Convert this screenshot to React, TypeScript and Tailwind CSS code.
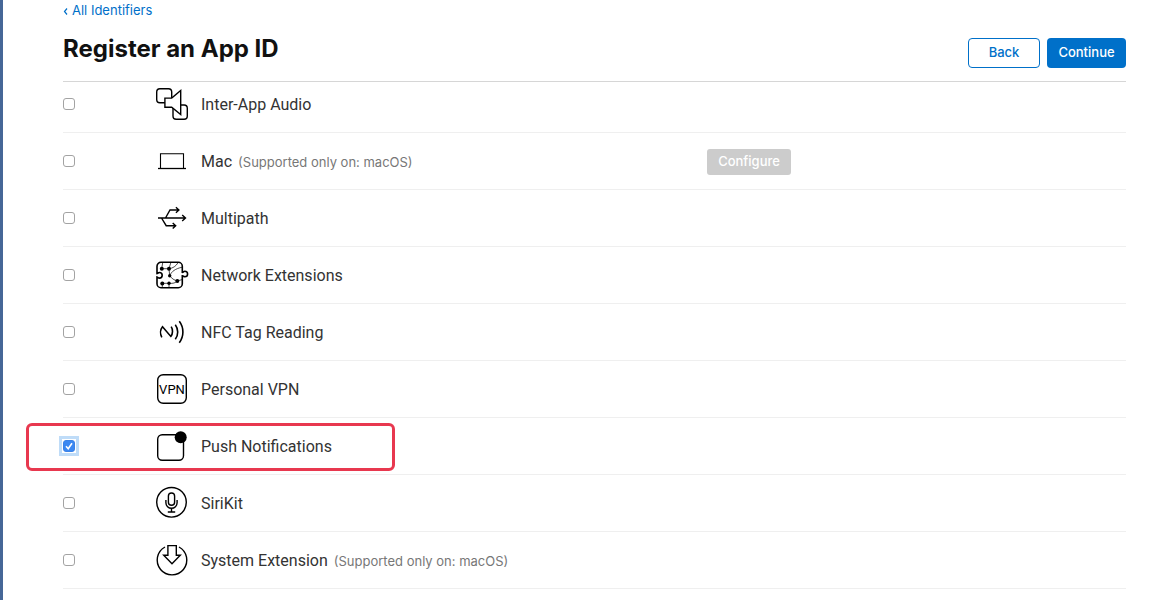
import { useState, type ReactNode } from "react";

function Icon({ children }: { children: ReactNode }) {
  return (
    <svg
      viewBox="0 0 34 34"
      className="size-[34px]"
      fill="none"
      stroke="#000"
      strokeWidth="1.4"
      aria-hidden="true"
    >
      {children}
    </svg>
  );
}

const AudioIcon = (
  <Icon>
    <rect x="1.7" y="1.7" width="15" height="14" rx="3.2" />
    <rect x="18" y="18" width="14.3" height="14.3" rx="3.2" />
    <path d="M9.9 11.1h6.8l9-7.6v24l-9-7.2H9.9z" fill="#fff" />
  </Icon>
);

const MacIcon = (
  <Icon>
    <path d="M5.5 24V9.7h23V24" strokeWidth="1.1" />
    <path d="M3 24.5h28" strokeWidth="1.3" />
  </Icon>
);

const MultipathIcon = (
  <Icon>
    <path d="M3 17h27.5M27.2 14l3.3 3-3.3 3M10.5 17l4.5-8h8.7M20.9 6.2 23.9 9l-3 2.8M6.5 17l4.7 7.7h9.3M17.7 21.9l3 2.8-3 2.8" />
  </Icon>
);

const NetworkIcon = (
  <Icon>
    <path
      d="M6 4.3h17.3a4 4 0 0 1 4 4v6c1 .3 1.2-1.100 2.500-1.100a2.800 2.800 0 0 1 0 5.600c-1.300 0-1.500-1.300-2.500-1.100v8a4 4 0 0 1-4 4H6a4 4 0 0 1-4-4v-6.600c1 .2 1.200 1 2.400 1a2.800 2.800 0 0 0 0-5.600c-1.200 0-1.400.8-2.400 1V8.300a4 4 0 0 1 4-4z"
      strokeWidth="1.6"
    />
    <path
      d="M6.7 10.7H14M6.7 10.7l1-6M14 10.7l1.800-6M14 10.7l.7 7M14 10.7c4-.5 7-2.500 9-6M14.7 17.7c2 2.800 4.500 4.500 7.600 5.300M14.7 17.7c1.800-4.200 5.500-7 12.500-8.500M22.3 23l5-1.500M22.3 23c-2 2-4 2.600-8.300 2.300H7.3M14 25.300v4M7.300 25.500v4"
      strokeWidth="0.7"
    />
    <g fill="#000" stroke="none">
      <circle cx="6.8" cy="10.7" r="2" />
      <circle cx="14" cy="10.7" r="2" />
      <circle cx="14.7" cy="17.7" r="1.7" />
      <circle cx="22.3" cy="23" r="2" />
      <circle cx="7.3" cy="25.5" r="2" />
      <circle cx="14" cy="25.3" r="1.7" />
    </g>
  </Icon>
);

const NfcIcon = (
  <Icon>
    <path
      d="M6.8 22.3C5 19 5.200 14.500 7.500 11.800l8.300 9.600c2.200-2.500 2.200-7 .4-9.800"
      strokeWidth="1.6"
    />
    <path d="M20.3 9.7c3.2 4.3 3.2 10.3 0 14.6M24.3 6.3c4.8 6.300 4.800 15.100 0 21.400" strokeWidth="1.6" />
  </Icon>
);

const VpnIcon = (
  <Icon>
    <rect x="2.7" y="2.7" width="28.6" height="28.6" rx="5.5" />
    <text
      x="17"
      y="21.7"
      textAnchor="middle"
      fill="#000"
      stroke="none"
      fontSize="13"
      fontFamily="Roboto, sans-serif"
    >
      VPN
    </text>
  </Icon>
);

const PushIcon = (
  <Icon>
    <rect x="2.7" y="5.7" width="25.8" height="25.6" rx="4.5" />
    <circle cx="25.7" cy="8.2" r="6" fill="#000" stroke="none" />
  </Icon>
);

const SiriIcon = (
  <Icon>
    <circle cx="16.5" cy="16.3" r="14.8" />
    <rect x="13.4" y="7" width="6.2" height="12.3" rx="3.1" />
    <path d="M10.9 14v2.7a5.6 5.6 0 0 0 11.2 0V14M16.5 22.3V26M12.8 26h7.4" />
  </Icon>
);

const SystemIcon = (
  <Icon>
    <path d="M10 4a14.8 14.8 0 1 0 14 0" />
    <path d="M12.9 2.6h8.4v9.7h4L17 20.8l-8.3-8.5h4.2z" />
  </Icon>
);

type Capability = {
  id: string;
  name: string;
  note?: string;
  icon: ReactNode;
  configurable?: boolean;
  highlighted?: boolean;
};

const capabilities: Capability[] = [
  { id: "audio", name: "Inter-App Audio", icon: AudioIcon },
  { id: "mac", name: "Mac", note: "(Supported only on: macOS)", icon: MacIcon, configurable: true },
  { id: "multipath", name: "Multipath", icon: MultipathIcon },
  { id: "network", name: "Network Extensions", icon: NetworkIcon },
  { id: "nfc", name: "NFC Tag Reading", icon: NfcIcon },
  { id: "vpn", name: "Personal VPN", icon: VpnIcon },
  { id: "push", name: "Push Notifications", icon: PushIcon, highlighted: true },
  { id: "siri", name: "SiriKit", icon: SiriIcon },
  { id: "system", name: "System Extension", note: "(Supported only on: macOS)", icon: SystemIcon },
];

function CapabilityRow({
  item,
  checked,
  onToggle,
}: {
  item: Capability;
  checked: boolean;
  onToggle: () => void;
}) {
  return (
    <li className="relative grid h-[57px] grid-cols-[92px_46px_minmax(0,506fr)_minmax(0,419fr)] items-center border-b border-[#efefef]">
      <span className="relative flex size-3">
        <input
          id={item.id}
          type="checkbox"
          checked={checked}
          onChange={onToggle}
          className="size-3 appearance-none rounded-[3px] border border-[#a3a3a3] bg-white checked:border-[#3b82e6] checked:bg-[#3b88f2]"
        />
        {checked && (
          <>
            <span className="pointer-events-none absolute -inset-1 border-3 border-[#bfdcf8]" />
            <svg viewBox="0 0 12 12" className="pointer-events-none absolute inset-0" fill="none" stroke="#fff" strokeWidth="1.6" aria-hidden="true">
              <path d="M3 6.3 5.2 8.7 9 3.3" />
            </svg>
          </>
        )}
      </span>
      {item.icon}
      <div className="flex items-baseline gap-1.5 pt-0.5">
        <label htmlFor={item.id} className="font-['Roboto',sans-serif] text-base text-[#333]">
          {item.name}
        </label>
        {item.note && <span className="text-[13px] text-[#777]">{item.note}</span>}
      </div>
      {item.configurable && (
        <button
          type="button"
          disabled
          className="mt-0.5 h-[26px] w-[84px] rounded-[3px] bg-[#ccc] text-[13px] font-medium text-white"
        >
          Configure
        </button>
      )}
      {item.highlighted && (
        <span className="pointer-events-none absolute top-[5px] -left-[37px] h-12 w-[369px] rounded-md border-3 border-[#e8384f]" />
      )}
    </li>
  );
}

export default function App() {
  const [selected, setSelected] = useState<string[]>(["push"]);

  const toggle = (id: string) =>
    setSelected((current) =>
      current.includes(id) ? current.filter((entry) => entry !== id) : [...current, id],
    );

  return (
    <main className="min-h-screen border-l-3 border-[#466797] bg-white pr-[47px] pl-[60px] font-['Inter',sans-serif]">
      <header className="sticky top-0 z-10 border-b border-[#d6d6d6] bg-white pb-[13px]">
        <a href="#identifiers" className="flex h-[22px] items-center gap-1 text-[13px] text-[#0070c9]">
          <svg viewBox="0 0 5 8" className="h-2 w-[5px]" fill="none" stroke="currentColor" strokeWidth="1.2" aria-hidden="true">
            <path d="M4 1.5 1.5 4.5 4 7.5" />
          </svg>
          All Identifiers
        </a>
        <div className="flex items-end justify-between pt-3">
          <h1 className="self-start text-2xl leading-[30px] font-bold text-[#111]">Register an App ID</h1>
          <div className="flex gap-[7px] pt-1">
            <button type="button" className="h-[30px] w-[72px] rounded border border-[#0070c9] text-[13px] font-medium text-[#0070c9]">
              Back
            </button>
            <button type="button" className="h-[30px] w-[79px] rounded bg-[#0070c9] text-[13px] font-medium text-white">
              Continue
            </button>
          </div>
        </div>
      </header>
      <ul className="-mt-1.5">
        {capabilities.map((item) => (
          <CapabilityRow
            key={item.id}
            item={item}
            checked={selected.includes(item.id)}
            onToggle={() => toggle(item.id)}
          />
        ))}
      </ul>
    </main>
  );
}
